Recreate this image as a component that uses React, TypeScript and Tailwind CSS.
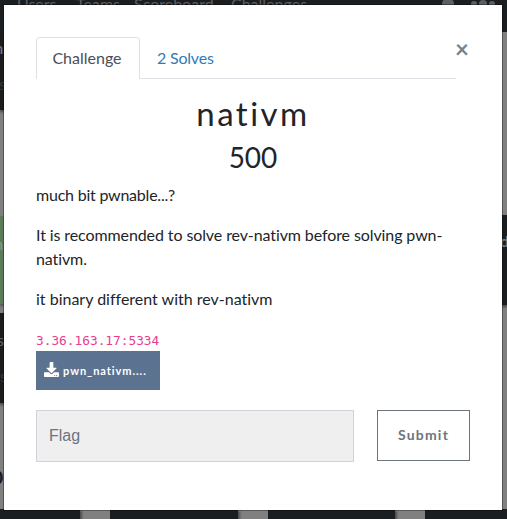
import { FaDownload } from "react-icons/fa";

function Backdrop() {
  return (
    <div className="flex h-full w-full flex-col bg-[#808080]">
      <div className="h-8 shrink-0 overflow-hidden bg-[#1b1e21]">
        <div className="-mt-2 flex items-center pl-[17px] text-base leading-6 text-[#5d5f61]">
          <span className="w-[59px]">Users</span>
          <span className="w-[58px]">Teams</span>
          <span className="w-[97px]">Scoreboard</span>
          <span className="w-[211px]">Challenges</span>
          <span className="mt-1 h-4 w-3 shrink-0 rounded-t-full bg-[#5d5f61]" />
          <span className="ml-[17px] flex shrink-0 items-center gap-0.5">
            <i className="size-1.5 rounded-full bg-[#5d5f61]" />
            <i className="size-2 rounded-full bg-[#5d5f61]" />
            <i className="size-1.5 rounded-full bg-[#5d5f61]" />
          </span>
        </div>
      </div>
      <div className="flex h-[477px] shrink-0 justify-between overflow-hidden">
        <div className="flex w-1 flex-col overflow-hidden">
          <div className="h-[78px] shrink-0 bg-[#1b1c1d] pt-[4px] text-base leading-6 text-[#808080] shadow-[0_2px_3px_#0008]">
            <span className="-ml-[10px] block">m</span>
            <span className="-ml-[1px] mt-3 block text-[#34383c]">s</span>
          </div>
          <div className="mt-[106px] h-[88px] shrink-0 bg-[#5b7b59] pt-4 text-base leading-6 text-[#8b9989] shadow-[0_2px_3px_#0006]">
            <span className="-ml-[6px] block">h</span>
          </div>
          <div className="mt-[9px] h-[90px] shrink-0 bg-[#1b1c1d] pt-[15px] text-base leading-6 text-[#686664] shadow-[0_2px_3px_#0008]">
            <span className="-ml-[3px] block">s</span>
            <span className="mt-3 block text-[#34383c]">s</span>
          </div>
          <span className="-ml-[12px] mt-[53px] block text-[28px] leading-9 text-[#1b1e21]">o</span>
        </div>
        <div className="flex w-[5px] flex-col overflow-hidden">
          <div className="mt-[183px] h-[90px] shrink-0 bg-[#1a1e21] pt-[14px] text-base font-bold leading-6 text-[#808080] shadow-[0_2px_3px_#0008]">
            <span className="-ml-[2px] block">d</span>
          </div>
        </div>
      </div>
      <div className="flex h-2.5 shrink-0">
        <div className="w-20 bg-[#1a1e21] shadow-[2px_2px_2px_#0006]" />
        <div className="ml-[30px] w-32 bg-[#1a1e21] shadow-[2px_2px_2px_#0006]" />
        <div className="ml-[30px] w-[127px] bg-[#1a1e21] shadow-[2px_2px_2px_#0006]" />
        <div className="ml-[30px] flex-1 bg-[#1a1e21]" />
      </div>
    </div>
  );
}

export default function App() {
  return (
    <div className="relative h-[519px] w-[507px] overflow-hidden font-['Lato',sans-serif] text-[#212529] [font-variant-ligatures:none]">
      <Backdrop />
      <div className="absolute left-1 top-[5px] h-[505px] w-[498px] bg-white px-8 pt-8 shadow-[0_0_0_1px_#0005]">
        <div className="flex">
          <div className="flex h-[42px] w-[420px] border-b border-[#dee2e6]">
            <button className="-mb-px h-[42px] w-[104px] rounded-t border border-b-0 border-[#dee2e6] bg-white pb-0.5 pr-0.5 text-base leading-6 text-[#495057]">
              Challenge
            </button>
            <button className="px-4 pl-[17px] text-base leading-6 tracking-[-0.2px] text-[#337ab7]">2 Solves</button>
          </div>
          <button className="-ml-px h-6 text-2xl font-bold leading-6 text-[#808080]">×</button>
        </div>
        <h2 className="mt-[15px] text-center text-[33px] leading-[38px] tracking-[2.5px]">nativm</h2>
        <h3 className="mt-2 text-center text-[28px] leading-[34px]">500</h3>
        <div className="mt-[9px] flex flex-col gap-4 text-base leading-6">
          <p className="tracking-[-0.22px]">much bit pwnable...?</p>
          <p className="tracking-[-0.1px]">It is recommended to solve rev-nativm before solving pwn-nativm.</p>
          <p>it binary different with rev-nativm</p>
        </div>
        <div className="mt-[17px] h-[22px] font-['DejaVu_Sans_Mono',monospace] text-[12.8px] leading-[26px] text-[#e83e8c]">
          3.36.163.17:5334
        </div>
        <button className="mt-[1px] flex h-[39px] w-[124px] items-center bg-[#5b7290] pl-2 text-white">
          <FaDownload size={15} className="-mt-0.5" />
          <span className="ml-[4px] mt-px text-[11px] font-bold tracking-[0.95px]">pwn_nativm....</span>
        </button>
        <div className="mt-5 flex items-start justify-between">
          <input
            placeholder="Flag"
            className="h-[52px] w-[318px] border border-[#ced4da] bg-[#efefef] px-3 font-['Liberation_Sans',sans-serif] text-base placeholder:text-[#6c757d]"
          />
          <button className="h-[51px] w-[93px] border border-[#6c757d] pb-0.5 text-sm font-bold tracking-[1.2px] text-[#6c757d]">
            Submit
          </button>
        </div>
      </div>
    </div>
  );
}
